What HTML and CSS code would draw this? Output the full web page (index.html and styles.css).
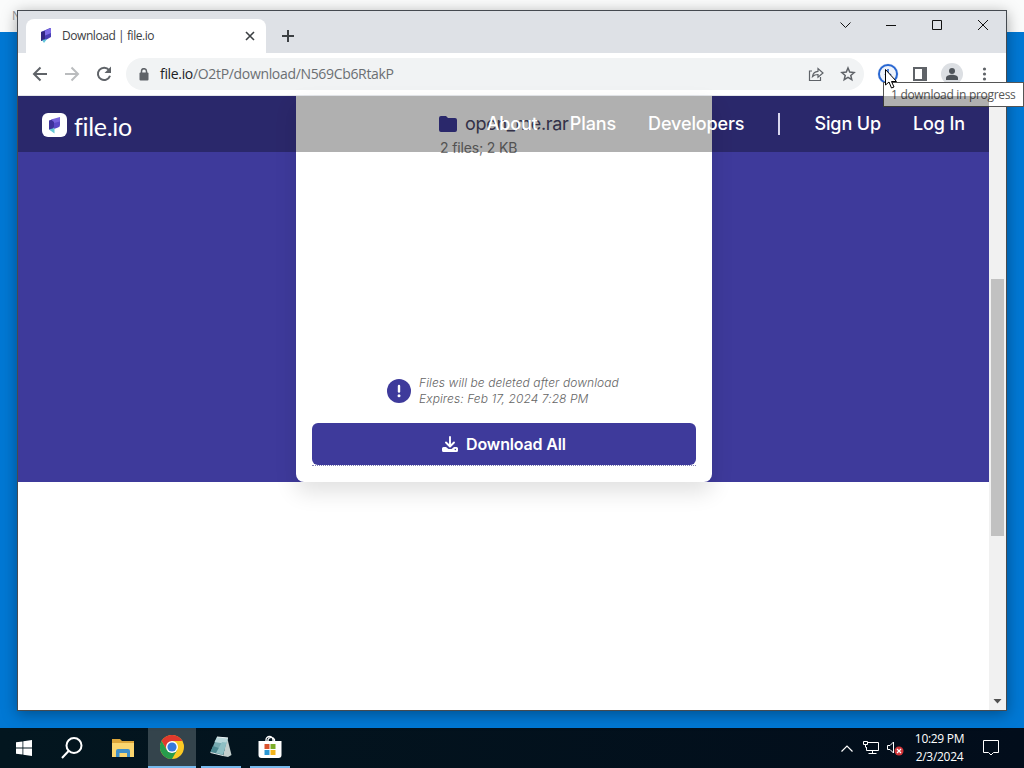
FILE: index.html
```html
<!DOCTYPE html>
<html lang="en">
<head>
<meta charset="UTF-8">
<meta name="viewport" content="width=device-width, initial-scale=1.0">
<title>Download | file.io</title>
<link rel="stylesheet" href="styles.css">
</head>
<body>
<div class="desktop">
    <div class="back-window">N</div>

    <div class="window">
        <div class="titlebar">
            <div class="tab">
                <svg class="favicon" width="12" height="16" viewBox="0 0 12 16"><path fill="#4a3fb5" d="M1 4l9-4q1 0 1 1v8l-7 4-3-1z"/><path fill="#7d6be6" d="M4 3l7-3v5L4 8z"/><path fill="#332884" d="M1 4l4-1v9l-4 1z"/><path fill="#63c5da" d="M2 12l5-1-3 4z"/></svg>
                <span class="tab-title">Download | file.io</span>
                <svg width="10" height="10" viewBox="0 0 10 10" fill="none" stroke="#3c4043" stroke-width="1.6"><path d="M1 1l8 8M9 1L1 9"/></svg>
            </div>
            <svg class="new-tab" width="14" height="14" viewBox="0 0 14 14" stroke="#3c4043" stroke-width="2"><path d="M7 1v12M1 7h12"/></svg>
            <div class="window-controls">
                <svg viewBox="0 0 46 28"><path d="M22.500 11.500l5 5 5-5"/></svg>
                <svg viewBox="0 0 46 28"><path d="M22 14.500h10"/></svg>
                <svg viewBox="0 0 46 28"><path d="M22.500 9.500h9v9h-9z"/></svg>
                <svg viewBox="0 0 46 28"><path d="M22 9l10 10M32 9L22 19"/></svg>
            </div>
        </div>

        <div class="toolbar">
            <svg class="tool" width="16" height="16" viewBox="0 0 16 16" fill="none" stroke="#5f6368" stroke-width="2"><path d="M15 8H2M8.500 1.500L2 8l6.500 6.500"/></svg>
            <svg class="tool" width="16" height="16" viewBox="0 0 16 16" fill="none" stroke="#babcbe" stroke-width="2"><path d="M1 8h13M7.500 1.500L14 8l-6.500 6.500"/></svg>
            <svg class="tool" width="16" height="16" viewBox="0 0 16 16"><path fill="none" stroke="#5f6368" stroke-width="2" d="M13 4A6.200 6.200 0 1 0 14 9.800"/><path fill="#5f6368" d="M15 0.500v6.500H8.500z"/></svg>
            <div class="address">
                <svg width="10" height="13" viewBox="0 0 10 13"><path fill="none" stroke="#5f6368" stroke-width="1.500" d="M2.500 6V3.200a2.500 2.500 0 0 1 5 0V6"/><rect y="4.500" x="0.500" width="9" height="8" rx="1" fill="#5f6368"/></svg>
                <span class="url"><b>file.io</b>/O2tP/download/N569Cb6RtakP</span>
                <svg class="share" width="16" height="16" viewBox="0 0 16 16" fill="none" stroke="#5f6368" stroke-width="1.200"><path d="M4 5H1.500v9.500h11V11M4.500 10.500C5 7 7 5.500 10 5.300V2.500L15 7l-5 4.300V8.500C7.500 8.500 6 9 4.500 10.500z"/></svg>
                <svg width="16" height="16" viewBox="0 0 16 16" fill="none" stroke="#5f6368" stroke-width="1.500"><path d="M8 2l1.700 4.100 4.400.4-3.300 2.900 1 4.300L8 11.400l-3.800 2.300 1-4.300L1.900 6.500l4.400-.4z"/></svg>
            </div>
            <div class="actions">
                <svg width="22" height="22" viewBox="0 0 22 22"><circle cx="11" cy="11" r="10.500" fill="#dce5f5"/><circle cx="11" cy="11" r="9" fill="#eef3fb" stroke="#2867d2" stroke-width="2"/><path fill="none" stroke="#2867d2" stroke-width="1.600" d="M11 6v8M8 11l3 3 3-3"/></svg>
                <svg width="22" height="22" viewBox="0 0 22 22"><rect x="5" y="5" width="12" height="12" fill="#fff" stroke="#5f6368" stroke-width="2"/><path fill="#5f6368" d="M13 5h4v12h-4z"/></svg>
                <svg width="22" height="22" viewBox="0 0 22 22"><circle cx="11" cy="11" r="11" fill="#dcdfe3"/><circle cx="11" cy="8" r="3" fill="#4f545a"/><path fill="#4f545a" d="M5 17v-2c0-2 3-3.200 6-3.200s6 1.200 6 3.200v2z"/></svg>
                <svg width="22" height="22" viewBox="0 0 22 22" fill="#5f6368"><circle cx="11.500" cy="6" r="1.600"/><circle cx="11.500" cy="11" r="1.600"/><circle cx="11.500" cy="16" r="1.600"/></svg>
            </div>
        </div>

        <div class="viewport">
            <div class="page">
                <header class="site-header">
                    <svg class="logo" width="25" height="24" viewBox="0 0 25 24"><rect width="25" height="24" rx="6" fill="#fff"/><path fill="#3e329c" d="M7 7.500l5-1.500v8l-1 4-4-1.500z"/><path fill="#7663dc" d="M9 6.500l9-2.500v8l-6 1.500V9z"/><path fill="#5b49c7" d="M12 10l6-1.500V12q0 2-2 2.500L12 16z"/><path fill="#65c8d5" d="M7 16.500l5.500-1.500v5.500z"/></svg>
                    <span class="brand">file.io</span>
                    <nav class="nav">
                        <a>About</a>
                        <a>Plans</a>
                        <a>Developers</a>
                        <i class="divider"></i>
                        <a>Sign Up</a>
                        <a>Log In</a>
                    </nav>
                </header>
                <div class="hero">
                    <div class="card">
                        <div class="file">
                            <div class="file-name">
                                <svg width="18" height="16" viewBox="0 0 18 16"><path fill="#3e3a9b" d="M2 0h5l2 2h7a2 2 0 0 1 2 2v10a2 2 0 0 1-2 2H2a2 2 0 0 1-2-2V2a2 2 0 0 1 2-2z"/></svg>
                                <span>open_me.rar</span>
                            </div>
                            <div class="file-info">2 files; 2 KB</div>
                        </div>
                        <div class="notice">
                            <svg width="24" height="24" viewBox="0 0 24 24"><circle cx="12" cy="12" r="12" fill="#3e3a9b"/><path stroke="#fff" stroke-width="2.400" stroke-linecap="round" d="M12 7v5.500"/><circle cx="12" cy="16.800" r="1.500" fill="#fff"/></svg>
                            <p>Files will be deleted after download<br>Expires: Feb 17, 2024 7:28 PM</p>
                        </div>
                        <div class="download-wrap">
                            <div class="download-btn">
                                <svg width="16" height="16" viewBox="0 0 16 16"><path fill="none" stroke="#fff" stroke-width="1.900" stroke-linecap="round" stroke-linejoin="round" d="M8 1v9M4 6.500l4 4 4-4"/><path fill="#fff" d="M1.500 11H4L6.500 13h3l2.500-2h2.500q1.500 0 1.500 1.500v2q0 1.500-1.500 1.500h-13Q0 16 0 14.500v-2q0-1.500 1.500-1.500z"/><circle cx="13.300" cy="13.500" r=".7" fill="#3e3a9b"/></svg>
                                <span>Download All</span>
                            </div>
                        </div>
                    </div>
                </div>
            </div>
            <div class="scrollbar">
                <div class="thumb"></div>
                <svg width="9" height="5" viewBox="0 0 9 5"><path fill="#505050" d="M0.500 0h8l-4 4.500z"/></svg>
            </div>
        </div>
    </div>

    <div class="tooltip">1 download in progress</div>
    <svg class="cursor" width="13" height="20" viewBox="0 0 13 20"><path fill="#fff" stroke="#000" d="M.5.500v15.500l3.500-3L6.500 19l2.500-1-2.500-5.500h5z"/></svg>

    <div class="taskbar">
        <div class="task start"><svg width="16" height="16" viewBox="0 0 16 16" fill="#fff"><path d="M0 2.300l6.500-.9v6.200H0zM7.300 1.300L16 0v7.600H7.300zM0 8.400h6.500v6.200L0 13.700zM7.300 8.400H16V16l-8.700-1.300z"/></svg></div>
        <div class="task search"><svg width="22" height="22" viewBox="0 0 22 22" fill="none" stroke="#fff" stroke-width="2"><circle cx="13" cy="8.500" r="7.500"/><path d="M7.600 14L1 21"/></svg></div>
        <div class="task"><svg width="22" height="20" viewBox="0 0 22 20"><path fill="#dca63a" d="M0 1h8l2 2h12v4H0z"/><path fill="#fbd66f" d="M0 5h22v14H0z"/><path fill="#3f8fc9" d="M4 19v-6q0-2 2-2h10q2 0 2 2v6h-3v-4H7.500v4z"/></svg></div>
        <div class="task active"><svg width="24" height="24" viewBox="0 0 24 24"><circle cx="12" cy="12" r="12" fill="#fbc924"/><path fill="#e0392d" d="M1.600 6A12 12 0 0 1 22.400 6H12L6.800 15z"/><path fill="#279c4c" d="M1.600 6A12 12 0 0 0 12 24l5.200-9L12 16 6.800 15z"/><circle cx="12" cy="12" r="6" fill="#fff"/><circle cx="12" cy="12" r="4.600" fill="#3779dc"/></svg></div>
        <div class="task open"><svg width="24" height="24" viewBox="0 0 24 24"><path fill="#c3cfcd" d="M18 2l4.500 18-3.500 2-5-1z"/><path fill="#77abb1" d="M8 2l11 1-5 17-12.500-3z"/><path fill="#b8d7da" d="M8 2l11 1-2 6L5.500 7z"/><path fill="#4c8a92" d="M4 11l11.500 4-1.500 5-12.500-3z"/><path fill="#8fc0c4" d="M13 7l4.500.5-3.500 12-7-1.500z"/><path stroke="#e8f1f2" fill="none" d="M8 2l11 1M1.500 17.500L14 20.500"/></svg></div>
        <div class="task open"><svg width="24" height="24" viewBox="0 0 24 24"><path fill="none" stroke="#fff" stroke-width="1.300" d="M8 7V5a3.500 3.500 0 0 1 7 0v2M10 7V4.500a3.500 3.500 0 0 1 6.500 0V7"/><path fill="#fff" d="M.5 6h23v14q0 3-3 3h-17q-3 0-3-3z"/><path fill="#d9512c" d="M6.500 9h5v5h-5z"/><path fill="#7cad2a" d="M12.500 9h5v5h-5z"/><path fill="#2b98d5" d="M6.500 15h5v5h-5z"/><path fill="#f3b41b" d="M12.500 15h5v5h-5z"/></svg></div>
        <div class="tray">
            <svg width="12" height="7" viewBox="0 0 12 7" fill="none" stroke="#fff" stroke-width="1.200"><path d="M.5 6.500L6 1l5.500 5.500"/></svg>
            <svg class="network" width="16" height="14" viewBox="0 0 16 14" fill="none" stroke="#fff"><path d="M5 1.500h10.500v8H3.500V6M9.500 9.500v3M5.500 12.500h8M.5.500h4v3h-4zM2.500 3.500v3"/></svg>
            <svg width="17" height="16" viewBox="0 0 17 16"><path fill="none" stroke="#fff" d="M.5 5.500H3L6.500 2v11L3 9.500H.5z"/><circle cx="12" cy="11" r="4.500" fill="#d13438"/><path stroke="#fff" stroke-width="1.200" d="M10 9l4 4M14 9l-4 4"/></svg>
            <div class="clock"><div>10:29 PM</div><div>2/3/2024</div></div>
            <svg width="16" height="16" viewBox="0 0 16 16" fill="none" stroke="#fff"><path d="M.5.500h15v12h-5L8 15l-2.500-2.500h-5z"/></svg>
        </div>
    </div>
</div>
</body>
</html>
```
FILE: styles.css
```css
* {
    box-sizing: border-box;
}
body {
    margin: 0;
    font-family: "Open Sans", "Noto Sans", sans-serif;
}
svg {
    display: block;
    flex: none;
}
.desktop {
    position: relative;
    width: 1024px;
    height: 768px;
    overflow: hidden;
    background: #0178d4;
    display: flex;
    flex-direction: column;
    justify-content: space-between;
}
.back-window {
    height: 32px;
    padding: 8px 12px;
    font-size: 12px;
    line-height: 16px;
    color: #999;
    background: #fafbfb;
}

/* browser window */
.window {
    position: absolute;
    left: 17px;
    top: 10px;
    width: 990px;
    height: 701px;
    border: 1px solid #454a50;
    background: #fff;
    display: flex;
    flex-direction: column;
    box-shadow: 0 3px 14px rgba(0, 0, 0, 0.35);
}
.titlebar {
    display: flex;
    height: 42px;
    background: #dee1e6;
}
.tab {
    display: flex;
    align-items: center;
    width: 240px;
    height: 34px;
    margin: 8px 0 0 8px;
    padding: 0 11px 0 14px;
    background: #fff;
    border-radius: 8px 8px 0 0;
}
.tab-title {
    flex: 1;
    margin-left: 10px;
    padding-bottom: 1px;
    font-size: 12px;
    letter-spacing: -0.43px;
    color: #3c4043;
}
.new-tab {
    margin: 18px 0 0 15px;
}
.window-controls {
    display: flex;
    margin-left: auto;
    padding-right: 4px;
}
.window-controls svg {
    width: 46px;
    height: 28px;
    fill: none;
    stroke: #111;
    stroke-width: 1;
}
.toolbar {
    display: flex;
    align-items: center;
    height: 43px;
    padding-left: 14px;
    background: #fff;
    border-bottom: 1px solid #e4e6ea;
}
.tool {
    margin-right: 16px;
}
.address {
    display: flex;
    align-items: center;
    width: 738px;
    height: 32px;
    margin-left: -2px;
    padding: 0 8px 0 13px;
    border-radius: 16px;
    background: #f1f3f4;
}
.url {
    flex: 1;
    margin-left: 11px;
    padding-bottom: 1px;
    font-size: 14px;
    letter-spacing: -0.33px;
    color: #6b6f73;
}
.url b {
    font-weight: 400;
    color: #202124;
}
.share {
    margin-right: 16px;
}
.actions {
    display: flex;
    gap: 10px;
    margin-left: 13px;
}

/* page */
.viewport {
    flex: 1;
    display: flex;
    min-height: 0;
}
.page {
    flex: 1;
    display: flex;
    flex-direction: column;
    font-family: Inter, sans-serif;
}
.site-header {
    position: relative;
    z-index: 1;
    display: flex;
    align-items: center;
    height: 56px;
    margin-bottom: -56px;
    padding: 0 24px;
    background: rgba(0, 0, 0, 0.31);
    color: #fff;
}
.logo {
    margin-top: 2px;
}
.brand {
    margin: 4px 0 0 7px;
    font-family: Lato, sans-serif;
    font-size: 25px;
    letter-spacing: -0.3px;
}
.nav {
    flex: 1;
    display: flex;
    align-items: center;
    justify-content: flex-end;
    gap: 32px;
    padding-bottom: 1px;
    font-size: 18px;
    font-weight: 500;
    letter-spacing: -0.12px;
}
.divider {
    width: 2px;
    height: 22px;
    margin: 0 2px;
    background: #d8d6ed;
}
.hero {
    height: 386px;
    display: flex;
    padding-left: 278px;
    background: #3e3a9b;
}
.card {
    display: flex;
    flex-direction: column;
    width: 416px;
    padding: 16px;
    background: #fff;
    border-radius: 0 0 8px 8px;
    box-shadow: 0 10px 22px rgba(0, 0, 0, 0.12);
}
.file {
    flex: 1;
    margin-left: 127px;
}
.file-name {
    display: flex;
    align-items: center;
    gap: 8px;
    height: 23px;
    font-size: 18px;
    letter-spacing: -0.3px;
    color: #4a4768;
}
.file-info {
    margin: 4px 0 0 1px;
    font-size: 14px;
    line-height: 18px;
    letter-spacing: -0.15px;
    color: #777;
}
.notice {
    display: flex;
    align-items: center;
    gap: 8px;
    margin: 0 0 16px 75px;
}
.notice p {
    margin: 0;
    font-size: 12px;
    font-style: italic;
    font-weight: 300;
    line-height: 16px;
    letter-spacing: 0.08px;
    color: #666;
}
.download-wrap {
    border-bottom: 1px dotted #8280b5;
}
.download-btn {
    display: flex;
    align-items: center;
    justify-content: center;
    gap: 8px;
    height: 42px;
    border-radius: 6px;
    background: #3e3a9b;
    color: #fff;
    font-size: 16px;
    font-weight: 600;
    letter-spacing: -0.15px;
}
.scrollbar {
    width: 17px;
    padding: 183px 2px 6px;
    display: flex;
    flex-direction: column;
    align-items: center;
    justify-content: space-between;
    background: #f1f1f1;
}
.thumb {
    width: 13px;
    height: 257px;
    background: #c1c1c1;
}
.tooltip {
    position: absolute;
    left: 883px;
    top: 82px;
    width: 141px;
    height: 25px;
    padding-left: 7px;
    border: 1px solid #555;
    background: #fff;
    color: #575757;
    font-size: 12px;
    line-height: 23px;
    letter-spacing: -0.3px;
    white-space: nowrap;
}
.cursor {
    position: absolute;
    left: 885px;
    top: 69px;
}

/* taskbar */
.taskbar {
    display: flex;
    height: 40px;
    background: linear-gradient(90deg, #03161f, #020d1b);
}
.task {
    display: flex;
    align-items: center;
    justify-content: center;
    width: 48px;
    margin-right: 1px;
}
.start {
    margin-right: 0;
}
.search {
    margin-right: 3px;
}
.active {
    background: #34444c;
    border-bottom: 2px solid #76b9ed;
}
.open {
    width: 40px;
    margin: 0 5px 0 4px;
    border-bottom: 2px solid #76b9ed;
}
.tray {
    display: flex;
    align-items: center;
    margin-left: auto;
    padding-right: 25px;
    color: #fff;
}
.network {
    margin: 0 8px 0 10px;
}
.clock {
    width: 71px;
    margin-right: 8px;
    text-align: center;
    font-size: 12px;
    line-height: 18px;
    letter-spacing: -0.3px;
}
```
